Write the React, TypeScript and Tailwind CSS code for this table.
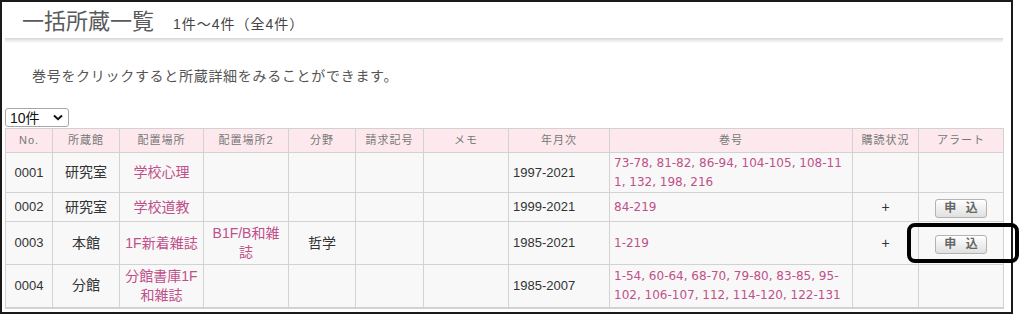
import React from "react";

const JP = "'Liberation Sans', 'Noto Sans CJK JP', sans-serif";
const LINKF = "'DejaVu Sans', 'Noto Sans CJK JP', sans-serif";

function Btn() {
  return (
    <button className="w-[52px] h-[19px] rounded-[3px] border border-[#b3b3b3] bg-linear-to-b from-white to-[#e0e0e0] text-[12px] font-bold text-[#666] leading-none tracking-[3px] pl-[3px]">
      申 込
    </button>
  );
}

type Row = {
  h: string;
  no: string;
  kan: string;
  basho: string;
  basho2: string;
  bunya: string;
  year: string;
  vol: React.ReactNode;
  kodoku: string;
  alert: boolean;
};

const rows: Row[] = [
  {
    h: "h-[40px]",
    no: "0001",
    kan: "研究室",
    basho: "学校心理",
    basho2: "",
    bunya: "",
    year: "1997-2021",
    vol: (
      <>
        73-78, 81-82, 86-94, 104-105, 108-11
        <br />
        1, 132, 198, 216
      </>
    ),
    kodoku: "",
    alert: false,
  },
  {
    h: "h-[29px]",
    no: "0002",
    kan: "研究室",
    basho: "学校道教",
    basho2: "",
    bunya: "",
    year: "1999-2021",
    vol: "84-219",
    kodoku: "+",
    alert: true,
  },
  {
    h: "h-[43px]",
    no: "0003",
    kan: "本館",
    basho: "1F新着雑誌",
    basho2: "B1F/B和雑誌",
    bunya: "哲学",
    year: "1985-2021",
    vol: "1-219",
    kodoku: "+",
    alert: true,
  },
  {
    h: "h-[43px]",
    no: "0004",
    kan: "分館",
    basho: "分館書庫1F和雑誌",
    basho2: "",
    bunya: "",
    year: "1985-2007",
    vol: (
      <>
        1-54, 60-64, 68-70, 79-80, 83-85, 95-
        <br />
        102, 106-107, 112, 114-120, 122-131
      </>
    ),
    kodoku: "",
    alert: false,
  },
];

const widths = [47, 67, 84, 85, 67, 68, 85, 101, 243, 66, 85];
const heads = ["No.", "所蔵館", "配置場所", "配置場所2", "分野", "請求記号", "メモ", "年月次", "巻号", "購読状況", "アラート"];

export default function App() {
  const td = "border border-[#d2d2d2] bg-[#f8f8f8] align-middle px-[4px] py-0";
  return (
    <div className="relative w-[1024px] h-[315px] bg-white" style={{ fontFamily: JP }}>
      <div className="w-[1013px] h-[314px] border-2 border-[#1a1a1a] pl-[3px] bg-white">
        <div className="w-[998px]">
          <div className="h-[36px] flex items-end pl-[17px]">
            <span className="text-[22px] leading-[32px] text-[#5a5a5a]">一括所蔵一覧</span>
            <span className="ml-[19px] text-[14px] leading-[28px] tracking-[1px] text-[#444]">1件～4件（全4件）</span>
          </div>
          <div className="h-[5px] bg-linear-to-b from-[#d6d6d6] to-white" />
          <p className="mt-[23px] pl-[27px] text-[14px] leading-[20px] tracking-[0.7px] text-[#555]">
            巻号をクリックすると所蔵詳細をみることができます。
          </p>
          <div className="mt-[22px] w-[64px] h-[19px] border border-[#a8a8a8] rounded-[3px] flex items-center justify-between pl-[4px] pr-[5px] text-[14px] leading-none text-[#111]">
            <span>10件</span>
            <svg width="10" height="7" viewBox="0 0 10 7">
              <path d="M1 1.5 L5 5.2 L9 1.5" fill="none" stroke="#111" strokeWidth="2" />
            </svg>
          </div>
          <table className="mt-[1px] w-[998px] table-fixed border-collapse border-b-2 border-b-[#d2d2d2]">
            <colgroup>
              {widths.map((w, i) => (
                <col key={i} style={{ width: w }} />
              ))}
            </colgroup>
            <thead>
              <tr className="h-[24px]">
                {heads.map((h) => (
                  <th
                    key={h}
                    className="border border-[#d2d2d2] bg-[#fde9ed] text-[11px] font-normal tracking-[1px] text-[#777] text-center align-middle p-0"
                  >
                    {h}
                  </th>
                ))}
              </tr>
            </thead>
            <tbody>
              {rows.map((r) => (
                <tr key={r.no} className={r.h}>
                  <td className={`${td} text-center text-[13px] text-[#333]`}>{r.no}</td>
                  <td className={`${td} text-center text-[14px] text-[#333] leading-[19px]`}>{r.kan}</td>
                  <td className={`${td} text-center text-[14px] text-[#c0508a] leading-[19px]`}>{r.basho}</td>
                  <td className={`${td} text-center text-[14px] text-[#c0508a] leading-[19px]`}>{r.basho2}</td>
                  <td className={`${td} text-center text-[14px] text-[#333] leading-[19px]`}>{r.bunya}</td>
                  <td className={td}></td>
                  <td className={td}></td>
                  <td className={`${td} text-left text-[13px] text-[#333]`}>{r.year}</td>
                  <td className={`${td} text-left text-[12px] text-[#c0508a] leading-[18.5px] whitespace-nowrap`} style={{ fontFamily: LINKF }}>
                    {r.vol}
                  </td>
                  <td className={`${td} text-center text-[14px] text-[#333]`}>{r.kodoku}</td>
                  <td className={`${td} text-center`}>{r.alert ? <Btn /> : null}</td>
                </tr>
              ))}
            </tbody>
          </table>
        </div>
      </div>
      <div className="absolute left-[907px] top-[223px] w-[112px] h-[40px] border-[4px] border-black rounded-[8px]" />
    </div>
  );
}
